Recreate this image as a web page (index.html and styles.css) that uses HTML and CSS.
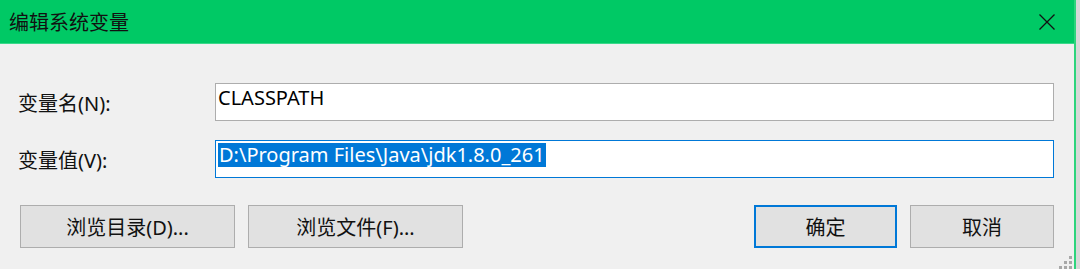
FILE: index.html
```html
<!DOCTYPE html>
<html lang="zh-CN">
<head>
  <meta charset="UTF-8" />
  <title>编辑系统变量</title>
  <link rel="stylesheet" href="styles.css">
</head>
<body>

  <div class="window">
    <header class="titlebar">
      <h1>编辑系统变量</h1>
      <svg class="close" width="16" height="16" viewBox="0 0 16 16">
        <path d="M0.5 0.5 L15.5 15.5 M15.5 0.5 L0.5 15.5" stroke="#111" stroke-width="1.3" fill="none"/>
      </svg>
    </header>

    <div class="content">
      <div class="form">
        <label class="label">变量名(N):</label>
        <div class="field">CLASSPATH</div>

        <label class="label">变量值(V):</label>
        <div class="field focused"><span class="selected">D:\Program Files\Java\jdk1.8.0_261</span></div>
      </div>

      <div class="buttons">
        <button class="btn wide">浏览目录(D)...</button>
        <button class="btn wide">浏览文件(F)...</button>
        <span class="spacer"></span>
        <button class="btn default">确定</button>
        <button class="btn">取消</button>
      </div>
    </div>

    <div class="grip">
      <i></i>
      <i></i><i></i>
      <i></i><i></i><i></i>
    </div>
  </div>

</body>
</html>
```

FILE: styles.css
```css
body {
  margin: 0;
  padding: 0;
  background: #d8d8d8;
  font-family: 'Noto Sans', 'Noto Sans CJK SC', sans-serif;
  color: #000;
}

.window {
  position: relative;
  width: 1074px;
  height: 269px;
  background: #f0f0f0;
  border-right: 2px solid #2ed47c;
  box-sizing: content-box;
}

.titlebar {
  display: flex;
  align-items: center;
  justify-content: space-between;
  height: 43px;
  padding: 0 19px 0 9px;
  background: #00c965;
  border-bottom: 1px solid #3ad88a;
}

.titlebar h1 {
  margin: 0;
  font-size: 20px;
  font-weight: normal;
  color: #111;
}

.close {
  display: block;
}

.content {
  padding: 39px 20px 0 20px;
}

.form {
  display: grid;
  grid-template-columns: 195px 1fr;
  row-gap: 19px;
  align-items: center;
}

.label {
  margin-left: -2px;
  font-size: 20px;
  color: #111;
}

.field {
  height: 38px;
  box-sizing: border-box;
  padding: 2px 3px 0 2px;
  background: #fff;
  border: 1px solid #adadad;
  font-size: 20px;
  line-height: 24px;
  white-space: nowrap;
}

.field.focused {
  border-color: #0078d7;
}

.selected {
  display: inline-block;
  background: #0078d7;
  color: #fff;
  padding: 0 1px;
}

.buttons {
  display: flex;
  gap: 13px;
  margin-top: 27px;
}

.spacer {
  flex: 1;
}

.btn {
  width: 144px;
  height: 43px;
  background: #e1e1e1;
  border: 1px solid #adadad;
  font-family: inherit;
  font-size: 20px;
  color: #111;
  padding: 0;
}

.btn.wide {
  width: 215px;
}

.btn.default {
  width: 143px;
  border: 2px solid #0078d7;
}

.grip {
  position: absolute;
  right: 2px;
  bottom: 0;
  width: 14px;
  display: grid;
  grid-template-columns: repeat(3, 3px);
  grid-auto-rows: 3px;
  gap: 2px;
  direction: rtl;
}

.grip i {
  background: #a8a8a8;
}

.grip i:nth-child(1) { grid-column: 1; grid-row: 1; }
.grip i:nth-child(2) { grid-column: 2; grid-row: 2; }
.grip i:nth-child(3) { grid-column: 1; grid-row: 2; }
.grip i:nth-child(4) { grid-column: 3; grid-row: 3; }
.grip i:nth-child(5) { grid-column: 2; grid-row: 3; }
.grip i:nth-child(6) { grid-column: 1; grid-row: 3; }
```
